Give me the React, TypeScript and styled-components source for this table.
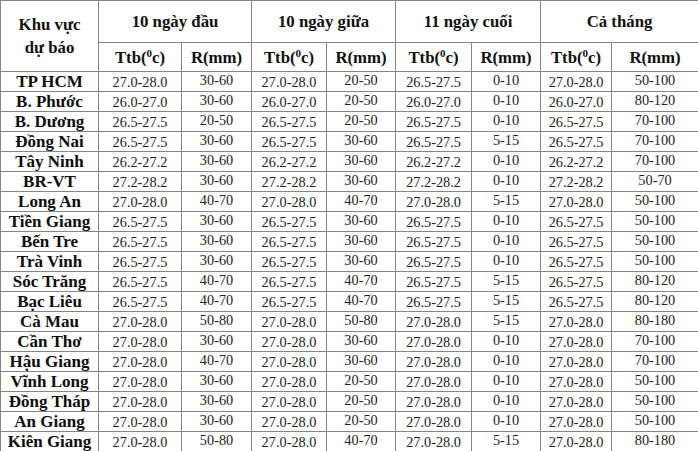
import styled, { createGlobalStyle } from "styled-components";

const GlobalStyle = createGlobalStyle`
    html, body {
        margin: 0;
        padding: 0;
        background: #ffffff;
    }
    body {
        font-family: "Liberation Serif", "Times New Roman", serif;
        color: #1a1a1a;
    }
`

const Table = styled.table`
    width: 698px;
    border-collapse: collapse;
    table-layout: fixed;
    background: #ffffff;
`

const HeadRow = styled.tr<{ $h: number }>`
    height: ${(p) => p.$h}px;
`

const HeadCell = styled.th`
    border: 1px solid #858585;
    padding: 0;
    font-weight: bold;
    font-size: 16.8px;
    line-height: 23px;
    color: #111;
    text-align: center;
    vertical-align: middle;
`

const Sup = styled.sup`
    font-size: 11px;
    vertical-align: 6px;
    line-height: 0;
`

const DataRow = styled.tr`
    height: 20px;
`

const NameCell = styled.td`
    border: 1px solid #858585;
    padding: 0;
    height: 19px;
    font-weight: bold;
    font-size: 17px;
    line-height: 19px;
    color: #0d0d0d;
    text-align: center;
    white-space: nowrap;
    overflow: hidden;
`

const ValueCell = styled.td`
    border: 1px solid #858585;
    padding: 0;
    height: 19px;
    font-size: 14.3px;
    line-height: 19px;
    color: #222;
    text-align: center;
    white-space: nowrap;
    overflow: hidden;
`

const Value = styled.span<{ $rain?: boolean }>`
    position: relative;
    top: ${(p) => (p.$rain ? "-1px" : "1px")};
`

const widths = [98, 83, 70, 75, 69, 76, 69, 71, 87];

const groups = ["10 ngày đầu", "10 ngày giữa", "11 ngày cuối", "Cả tháng"];

const rows: [string, string[]][] = [
    ["TP HCM", ["27.0-28.0", "30-60", "27.0-28.0", "20-50", "26.5-27.5", "0-10", "27.0-28.0", "50-100"]],
    ["B. Phước", ["26.0-27.0", "30-60", "26.0-27.0", "20-50", "26.0-27.0", "0-10", "26.0-27.0", "80-120"]],
    ["B. Dương", ["26.5-27.5", "20-50", "26.5-27.5", "20-50", "26.5-27.5", "0-10", "26.5-27.5", "70-100"]],
    ["Đồng Nai", ["26.5-27.5", "30-60", "26.5-27.5", "30-60", "26.5-27.5", "5-15", "26.5-27.5", "70-100"]],
    ["Tây Ninh", ["26.2-27.2", "30-60", "26.2-27.2", "30-60", "26.2-27.2", "0-10", "26.2-27.2", "70-100"]],
    ["BR-VT", ["27.2-28.2", "30-60", "27.2-28.2", "30-60", "27.2-28.2", "0-10", "27.2-28.2", "50-70"]],
    ["Long An", ["27.0-28.0", "40-70", "27.0-28.0", "40-70", "27.0-28.0", "5-15", "27.0-28.0", "50-100"]],
    ["Tiền Giang", ["26.5-27.5", "30-60", "26.5-27.5", "30-60", "26.5-27.5", "0-10", "26.5-27.5", "50-100"]],
    ["Bến Tre", ["26.5-27.5", "30-60", "26.5-27.5", "30-60", "26.5-27.5", "0-10", "26.5-27.5", "50-100"]],
    ["Trà Vinh", ["26.5-27.5", "30-60", "26.5-27.5", "30-60", "26.5-27.5", "0-10", "26.5-27.5", "50-100"]],
    ["Sóc Trăng", ["26.5-27.5", "40-70", "26.5-27.5", "40-70", "26.5-27.5", "5-15", "26.5-27.5", "80-120"]],
    ["Bạc Liêu", ["26.5-27.5", "40-70", "26.5-27.5", "40-70", "26.5-27.5", "5-15", "26.5-27.5", "80-120"]],
    ["Cà Mau", ["27.0-28.0", "50-80", "27.0-28.0", "50-80", "27.0-28.0", "5-15", "27.0-28.0", "80-180"]],
    ["Cần Thơ", ["27.0-28.0", "30-60", "27.0-28.0", "30-60", "27.0-28.0", "0-10", "27.0-28.0", "70-100"]],
    ["Hậu Giang", ["27.0-28.0", "40-70", "27.0-28.0", "30-60", "27.0-28.0", "0-10", "27.0-28.0", "70-100"]],
    ["Vĩnh Long", ["27.0-28.0", "30-60", "27.0-28.0", "20-50", "27.0-28.0", "0-10", "27.0-28.0", "50-100"]],
    ["Đồng Tháp", ["27.0-28.0", "30-60", "27.0-28.0", "20-50", "27.0-28.0", "0-10", "27.0-28.0", "50-100"]],
    ["An Giang", ["27.0-28.0", "30-60", "27.0-28.0", "20-50", "27.0-28.0", "0-10", "27.0-28.0", "50-100"]],
    ["Kiên Giang", ["27.0-28.0", "50-80", "27.0-28.0", "40-70", "27.0-28.0", "5-15", "27.0-28.0", "80-180"]],
];

const App: React.FC = () => {
    return (
        <>
            <GlobalStyle />
            <Table>
                <colgroup>
                    {widths.map((w, i) => (
                        <col key={i} style={{ width: w }} />
                    ))}
                </colgroup>
                <thead>
                    <HeadRow $h={42}>
                        <HeadCell rowSpan={2}>
                            Khu vực
                            <br />
                            dự báo
                        </HeadCell>
                        {groups.map((g) => (
                            <HeadCell key={g} colSpan={2}>{g}</HeadCell>
                        ))}
                    </HeadRow>
                    <HeadRow $h={29}>
                        {groups.flatMap((g) => [
                            <HeadCell key={g + "t"}>Ttb(<Sup>0</Sup>c)</HeadCell>,
                            <HeadCell key={g + "r"}>R(mm)</HeadCell>,
                        ])}
                    </HeadRow>
                </thead>
                <tbody>
                    {rows.map(([name, vals]) => (
                        <DataRow key={name}>
                            <NameCell>{name}</NameCell>
                            {vals.map((v, i) => (
                                <ValueCell key={i}>
                                    <Value $rain={i % 2 === 1}>{v}</Value>
                                </ValueCell>
                            ))}
                        </DataRow>
                    ))}
                </tbody>
            </Table>
        </>
    );
};

export default App;
